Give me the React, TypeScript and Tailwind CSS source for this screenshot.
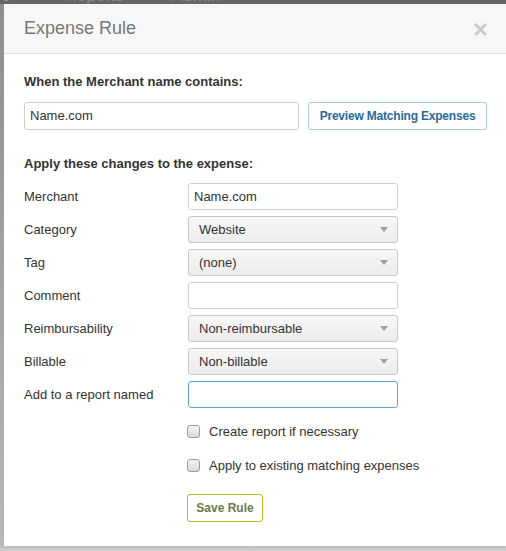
import React from 'react';

const rows: { label: string; kind: 'input' | 'select' | 'focus'; value: string }[] = [
  { label: 'Merchant', kind: 'input', value: 'Name.com' },
  { label: 'Category', kind: 'select', value: 'Website' },
  { label: 'Tag', kind: 'select', value: '(none)' },
  { label: 'Comment', kind: 'input', value: '' },
  { label: 'Reimbursability', kind: 'select', value: 'Non-reimbursable' },
  { label: 'Billable', kind: 'select', value: 'Non-billable' },
  { label: 'Add to a report named', kind: 'focus', value: '' },
];

function Field({ kind, value }: { kind: string; value: string }) {
  if (kind === 'select') {
    return (
      <div className="flex h-[27px] w-[210px] items-center justify-between rounded-[3px] border border-[#c8c8c8] bg-gradient-to-b from-[#f7f7f7] to-[#ececec] pl-[10px] pr-[9px] text-[13px] text-[#333]">
        <span>{value}</span>
        <span className="h-0 w-0 border-x-[4px] border-t-[5px] border-x-transparent border-t-[#a0a0a0]" />
      </div>
    );
  }
  return (
    <div
      className={
        'flex h-[27px] w-[210px] items-center rounded-[3px] border bg-white px-[5px] text-[13px] text-[#333] ' +
        (kind === 'focus' ? 'border-[#5aa7d6]' : 'border-[#cfcfcf]')
      }
    >
      {value}
    </div>
  );
}

function Check({ label }: { label: string }) {
  return (
    <div className="flex items-center gap-[9px] text-[13px] leading-[19px] text-[#333]">
      <span className="h-[13px] w-[13px] rounded-[3px] border border-[#9c9c9c] bg-gradient-to-b from-[#f4f4f4] to-[#d9d9d9]" />
      <span>{label}</span>
    </div>
  );
}

export default function App() {
  return (
    <div className="flex h-[551px] w-[506px] flex-col overflow-hidden bg-[#b4b4b4]" style={{ fontFamily: '"Liberation Sans", Arial, sans-serif' }}>
      {/* dimmed nav behind the modal */}
      <div className="h-[4px] overflow-hidden bg-[#666]">
        <div className="-mt-[13px] flex gap-[48px] pl-[2px] text-[17px] leading-[18px] text-[#8a8a8a]">
          <span>s</span>
          <span className="ml-[6px]">Reports</span>
          <span>Admin</span>
        </div>
      </div>

      <div className="flex flex-1">
        <div className="w-[4px] bg-gradient-to-b from-[#8e8e8e] to-[#b8b8b8]" />

        <div className="flex h-[542px] flex-1 flex-col bg-white">
          {/* header */}
          <div className="flex h-[50px] items-center justify-between border-b border-[#dadada] bg-[#f7f7f7] pl-[20px] pr-[18px]">
            <span className="text-[18px] text-[#777]">Expense Rule</span>
            <svg width="15" height="15" viewBox="0 0 15 15" className="mt-[1px]">
              <path d="M2 2 L13 13 M13 2 L2 13" stroke="#cbcbcb" strokeWidth="3" />
            </svg>
          </div>

          {/* body */}
          <div className="flex flex-col pl-[20px] pt-[19px]">
            <div className="text-[13px] font-bold leading-[18px] text-[#333]">When the Merchant name contains:</div>
            <div className="mt-[11px] flex gap-[9px]">
              <div className="flex h-[28px] w-[275px] items-center rounded-[3px] border border-[#cfcfcf] px-[5px] text-[13px] text-[#333]">
                Name.com
              </div>
              <div className="flex h-[28px] w-[179px] items-center justify-center rounded-[3px] border border-[#a9cbe3] text-[12px] font-bold tracking-[-0.2px] text-[#2a6a9a]">
                Preview Matching Expenses
              </div>
            </div>

            <div className="mt-[25px] text-[13px] font-bold leading-[18px] text-[#333]">Apply these changes to the expense:</div>

            <div className="mt-[10px] flex flex-col gap-[6px]">
              {rows.map((r) => (
                <div key={r.label} className="flex items-center">
                  <div className="w-[164px] text-[13px] text-[#333]">{r.label}</div>
                  <Field kind={r.kind} value={r.value} />
                </div>
              ))}
            </div>

            <div className="ml-[163px] mt-[14px] flex flex-col gap-[15px]">
              <Check label="Create report if necessary" />
              <Check label="Apply to existing matching expenses" />
            </div>

            <div className="ml-[163px] mt-[19px] flex h-[28px] w-[76px] items-center justify-center rounded-[3px] border border-[#b4bf1e] text-[12px] font-bold text-[#6b7a48]">
              Save Rule
            </div>
          </div>
        </div>
      </div>
      <div className="h-[5px] bg-gradient-to-b from-[#bdbdbd] to-[#cfcfcf]" />
    </div>
  );
}
